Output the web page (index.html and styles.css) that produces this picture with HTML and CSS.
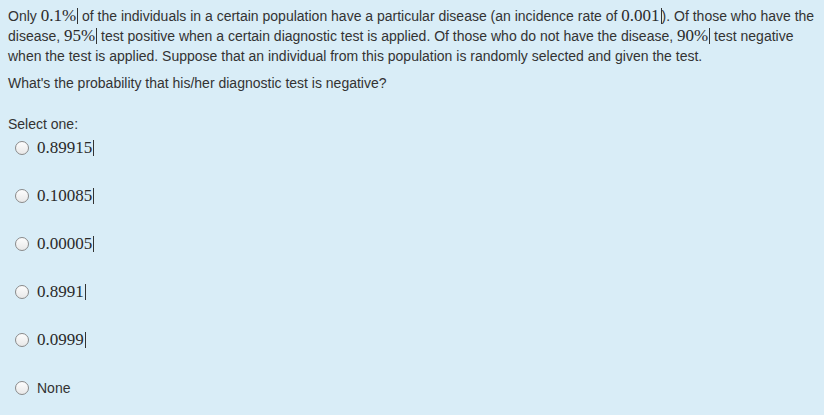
FILE: index.html
```html
<!DOCTYPE html>
<html>
<head>
<meta charset="utf-8">
<link rel="stylesheet" href="styles.css">
</head>
<body>
<div class="que">
  <div class="qtext">
    <p class="para">Only <span class="m">0.1%</span> of the individuals in a certain population have a particular disease (an incidence rate of <span class="m">0.001</span>). Of those who have the disease, <span class="m">95%</span> test positive when a certain diagnostic test is applied. Of those who do not have the disease, <span class="m">90%</span> test negative when the test is applied. Suppose that an individual from this population is randomly selected and given the test.</p>
    <p class="para ask">What's the probability that his/her diagnostic test is negative?</p>
  </div>
  <div class="prompt">Select one:</div>
  <div class="answers">
    <label class="opt"><span class="radio"></span><span class="m">0.89915</span></label>
    <label class="opt"><span class="radio"></span><span class="m">0.10085</span></label>
    <label class="opt"><span class="radio"></span><span class="m">0.00005</span></label>
    <label class="opt"><span class="radio"></span><span class="m">0.8991</span></label>
    <label class="opt"><span class="radio"></span><span class="m">0.0999</span></label>
    <label class="opt"><span class="radio"></span><span class="plain">None</span></label>
  </div>
</div>
</body>
</html>
```
FILE: styles.css
```css
html, body {
  margin: 0;
  padding: 0;
  background: #d9edf7;
}
body {
  font-family: "Liberation Sans", Arial, sans-serif;
  font-size: 14px;
  color: #333;
  width: 824px;
  height: 415px;
  overflow: hidden;
}
.que {
  padding: 6px 8px 0 8px;
}
.para {
  margin: 0;
  line-height: 20px;
}
.ask {
  margin-top: 7px;
}
.prompt {
  margin-top: 21px;
  line-height: 20px;
}
.answers {
  display: flex;
  flex-direction: column;
  margin-top: 2px;
}
.opt {
  display: flex;
  align-items: center;
  height: 24px;
  margin-bottom: 24px;
  gap: 8px;
  padding-left: 7px;
}
.radio {
  width: 12px;
  height: 12px;
  border-radius: 50%;
  border: 1px solid #8a8a8a;
  background: linear-gradient(#fdfdfd, #e8e8e8);
  box-sizing: content-box;
  flex: none;
}
.m {
  font-family: "Liberation Serif", "Times New Roman", serif;
  font-size: 17px;
  color: #2a2a2a;
  border-right: 1px solid #333;
  padding-right: 1px;
  line-height: 16px;
  display: inline-block;
}
.plain {
  font-size: 14px;
}
```
